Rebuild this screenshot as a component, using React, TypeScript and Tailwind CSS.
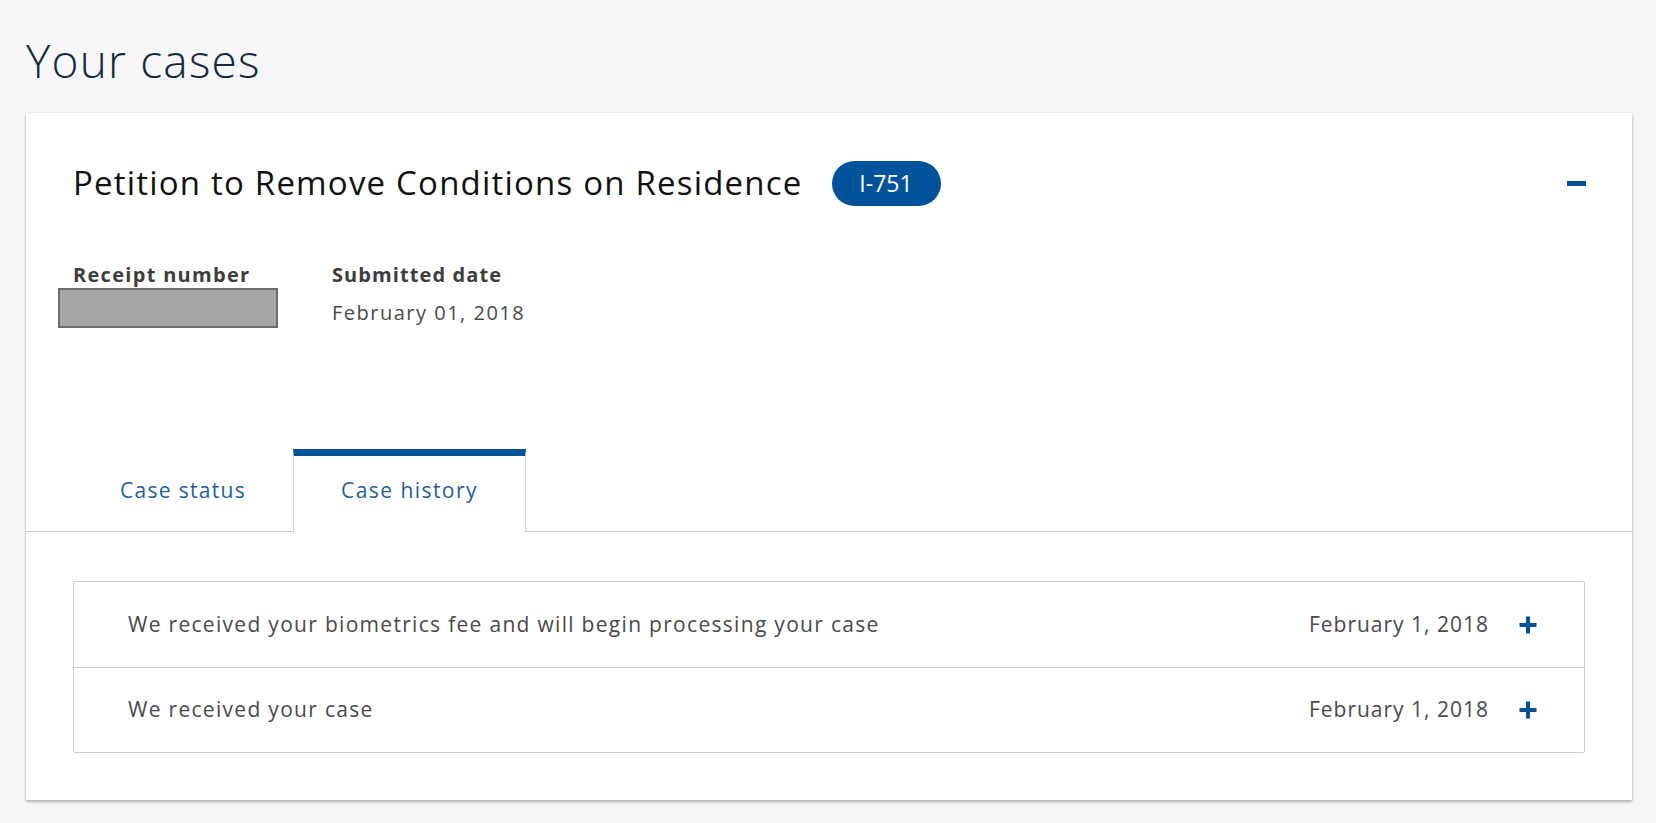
import React from "react";

const font = { fontFamily: "'Open Sans', Lato, Arial, sans-serif" };

function PlusIcon() {
  return (
    <svg width="18" height="18" viewBox="0 0 18 18" aria-hidden="true">
      <rect x="7" y="0.5" width="4" height="17" fill="#00529b" />
      <rect x="0.5" y="7" width="17" height="4" fill="#00529b" />
    </svg>
  );
}

const rows = [
  { text: "We received your biometrics fee and will begin processing your case", date: "February 1, 2018" },
  { text: "We received your case", date: "February 1, 2018" },
];

export default function App() {
  return (
    <div className="min-h-screen bg-[#f7f7f7] px-[26px] pb-[23px]" style={font}>
      <h1 className="pt-[34px] text-[46px] font-light leading-[52px] tracking-[1.2px] text-[#16283c]">Your cases</h1>
      <div className="mt-[27px] w-[1606px] bg-white shadow-[0_2px_3px_rgba(0,0,0,0.28),0_0_2px_rgba(0,0,0,0.08)]">
        <div className="flex items-center justify-between pl-[47px] pr-[46px] pt-[47px]">
          <div className="flex items-center gap-[29px]">
            <h2 className="text-[33px] leading-[46px] tracking-[1.2px] text-[#111]">Petition to Remove Conditions on Residence</h2>
            <span className="flex h-[45px] w-[109px] items-center justify-center rounded-full bg-[#00539b] text-[23px] text-white">
              I-751
            </span>
          </div>
          <span className="block h-[5px] w-[19px] bg-[#00529b]" />
        </div>
        <div className="flex pl-[47px] pt-[56px]">
          <div className="flex w-[259px] flex-col">
            <span className="text-[20px] font-bold leading-[26px] tracking-[1.3px] text-[#3d3d3d]">Receipt number</span>
            <span className="-ml-[15px] block h-[40px] w-[220px] border-2 border-[#6e6e6e] bg-[#a6a6a6]" />
          </div>
          <div className="flex flex-col">
            <span className="text-[20px] font-bold leading-[26px] tracking-[1.1px] text-[#3d3d3d]">Submitted date</span>
            <span className="mt-[12px] text-[20px] leading-[26px] tracking-[1.5px] text-[#4a4a4a]">February 01, 2018</span>
          </div>
        </div>
        <div className="mt-[121px] flex border-b border-[#d0d0d0] pl-[47px]">
          <div className="flex h-[82px] items-center px-[47px] pt-[2px] text-[21px] tracking-[1.3px] text-[#1f5f9e]">Case status</div>
          <div className="-mb-px flex h-[83px] items-center border-x border-[#d0d0d0] border-t-[7px] border-t-[#00529b] bg-white px-[47px] pb-[6px] text-[21px] tracking-[1.45px] text-[#1f5f9e]">
            Case history
          </div>
        </div>
        <div className="px-[47px] pb-[47px] pt-[49px]">
          <div className="rounded-[2px] border border-[#cfcfcf]">
            {rows.map((r, i) => (
              <div
                key={i}
                className={`flex h-[85px] items-center justify-between pl-[54px] pr-[47px] ${i > 0 ? "border-t border-[#cfcfcf]" : ""}`}
              >
                <span className="text-[21px] tracking-[1.3px] text-[#4a4a4a]">{r.text}</span>
                <div className="flex items-center gap-[30px]">
                  <span className="text-[21px] tracking-[1px] text-[#4a4a4a]">{r.date}</span>
                  <PlusIcon />
                </div>
              </div>
            ))}
          </div>
        </div>
      </div>
    </div>
  );
}
